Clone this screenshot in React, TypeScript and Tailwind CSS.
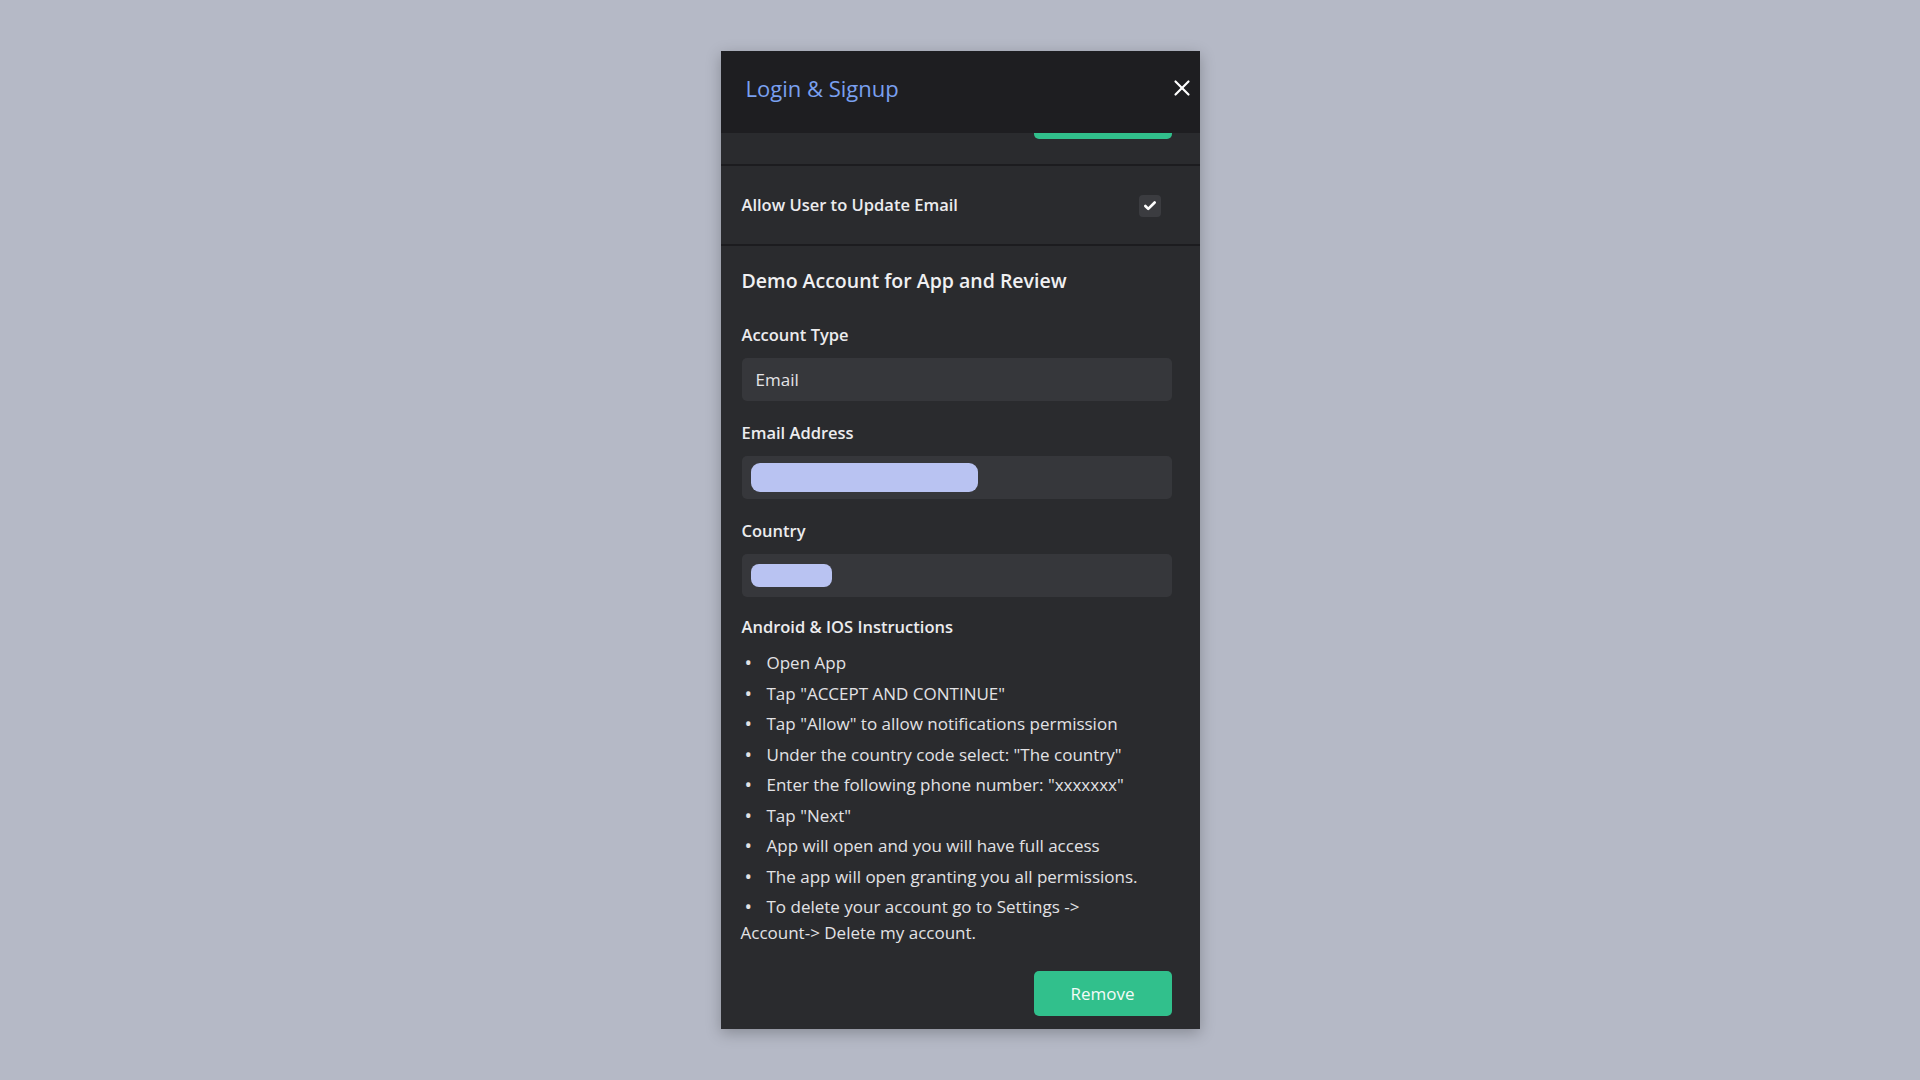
import { X, Check } from 'lucide-react'

const steps = [
    'Open App',
    'Tap "ACCEPT AND CONTINUE"',
    'Tap "Allow" to allow notifications permission',
    'Under the country code select: "The country"',
    'Enter the following phone number: "xxxxxxx"',
    'Tap "Next"',
    'App will open and you will have full access',
    'The app will open granting you all permissions.',
]

interface FieldProps {
    label: string
    children: React.ReactNode
}

const Field = ({ label, children }: FieldProps) => {
    return (
        <div className="flex flex-col gap-[12px]">
            <label className="text-[16.5px] leading-[22px] font-semibold text-[#ececee]">{label}</label>
            <div className="flex h-[43px] items-center rounded-[5px] bg-[#36373b] px-[9px]">{children}</div>
        </div>
    )
}

const Bullet = () => <span className="inline-block w-[25px] pl-[3px] align-top text-[20px] leading-[26px]">•</span>

const App = () => {
    return (
        <div
            className="flex min-h-screen items-center justify-center bg-[#b5b9c6]"
            style={{ fontFamily: '"Open Sans", "Noto Sans", sans-serif' }}
        >
            <div className="flex h-[978px] w-[479px] flex-col overflow-hidden bg-[#2a2b2e] shadow-[0_4px_14px_rgba(0,0,0,0.25)]">
                <header className="flex h-[82px] shrink-0 items-center justify-between bg-[#1e1e21] pb-[8px] pl-[25px] pr-[5px]">
                    <h1 className="text-[22px] font-medium text-[#7aa0f0]">Login &amp; Signup</h1>
                    <button className="flex h-[26px] w-[26px] items-center justify-center text-white">
                        <X size={34} strokeWidth={2} />
                    </button>
                </header>

                <div className="flex-1 overflow-hidden pl-[21px] pr-[28px]">
                    <div className="-mx-[21px] -mr-[28px] border-b-2 border-[#1c1c1f] pl-[21px] pr-[28px]">
                        <div className="flex h-[31px] justify-end">
                            <div className="h-[6px] w-[138px] rounded-b-[5px] bg-[#31c08c]" />
                        </div>
                    </div>

                    <div className="-mx-[21px] -mr-[28px] flex h-[80px] items-center justify-between border-b-2 border-[#1c1c1f] pl-[21px] pr-[39px]">
                        <span className="text-[16.5px] font-semibold text-[#ececee]">Allow User to Update Email</span>
                        <span className="mt-[2px] flex h-[22px] w-[22px] items-center justify-center rounded-[4px] bg-[#3b3c40] text-white">
                            <Check size={14} strokeWidth={4.5} />
                        </span>
                    </div>

                    <div className="flex flex-col pt-[21px]">
                        <h2 className="text-[19.5px] leading-[28px] font-semibold text-[#f0f0f2]">
                            Demo Account for App and Review
                        </h2>

                        <div className="mt-[29px] flex flex-col gap-[21px]">
                            <Field label="Account Type">
                                <span className="pl-[5px] text-[17px] text-[#e4e4e7]">Email</span>
                            </Field>
                            <Field label="Email Address">
                                <span className="h-[29px] w-[227px] rounded-[9px] bg-[#b9c3f2]" />
                            </Field>
                            <Field label="Country">
                                <span className="h-[23px] w-[81px] rounded-[8px] bg-[#b9c3f2]" />
                            </Field>
                        </div>

                        <h3 className="mt-[19px] text-[16.5px] leading-[22px] font-semibold text-[#ececee]">
                            Android &amp; IOS Instructions
                        </h3>

                        <ul className="mt-[12px] flex flex-col gap-[4.5px] text-[17px] leading-[26px] text-[#e2e2e5]">
                            {steps.map((step) => (
                                <li key={step}>
                                    <Bullet />
                                    {step}
                                </li>
                            ))}
                            <li>
                                <Bullet />
                                To delete your account go to Settings -&gt;
                                <br />
                                <span className="-ml-[1px]">Account-&gt; Delete my account.</span>
                            </li>
                        </ul>

                        <div className="mt-[25px] flex justify-end">
                            <button className="h-[45px] w-[138px] rounded-[5px] bg-[#31c08c] text-[17px] font-medium text-[#f4fbf8]">
                                Remove
                            </button>
                        </div>
                    </div>
                </div>
            </div>
        </div>
    )
}

export default App
